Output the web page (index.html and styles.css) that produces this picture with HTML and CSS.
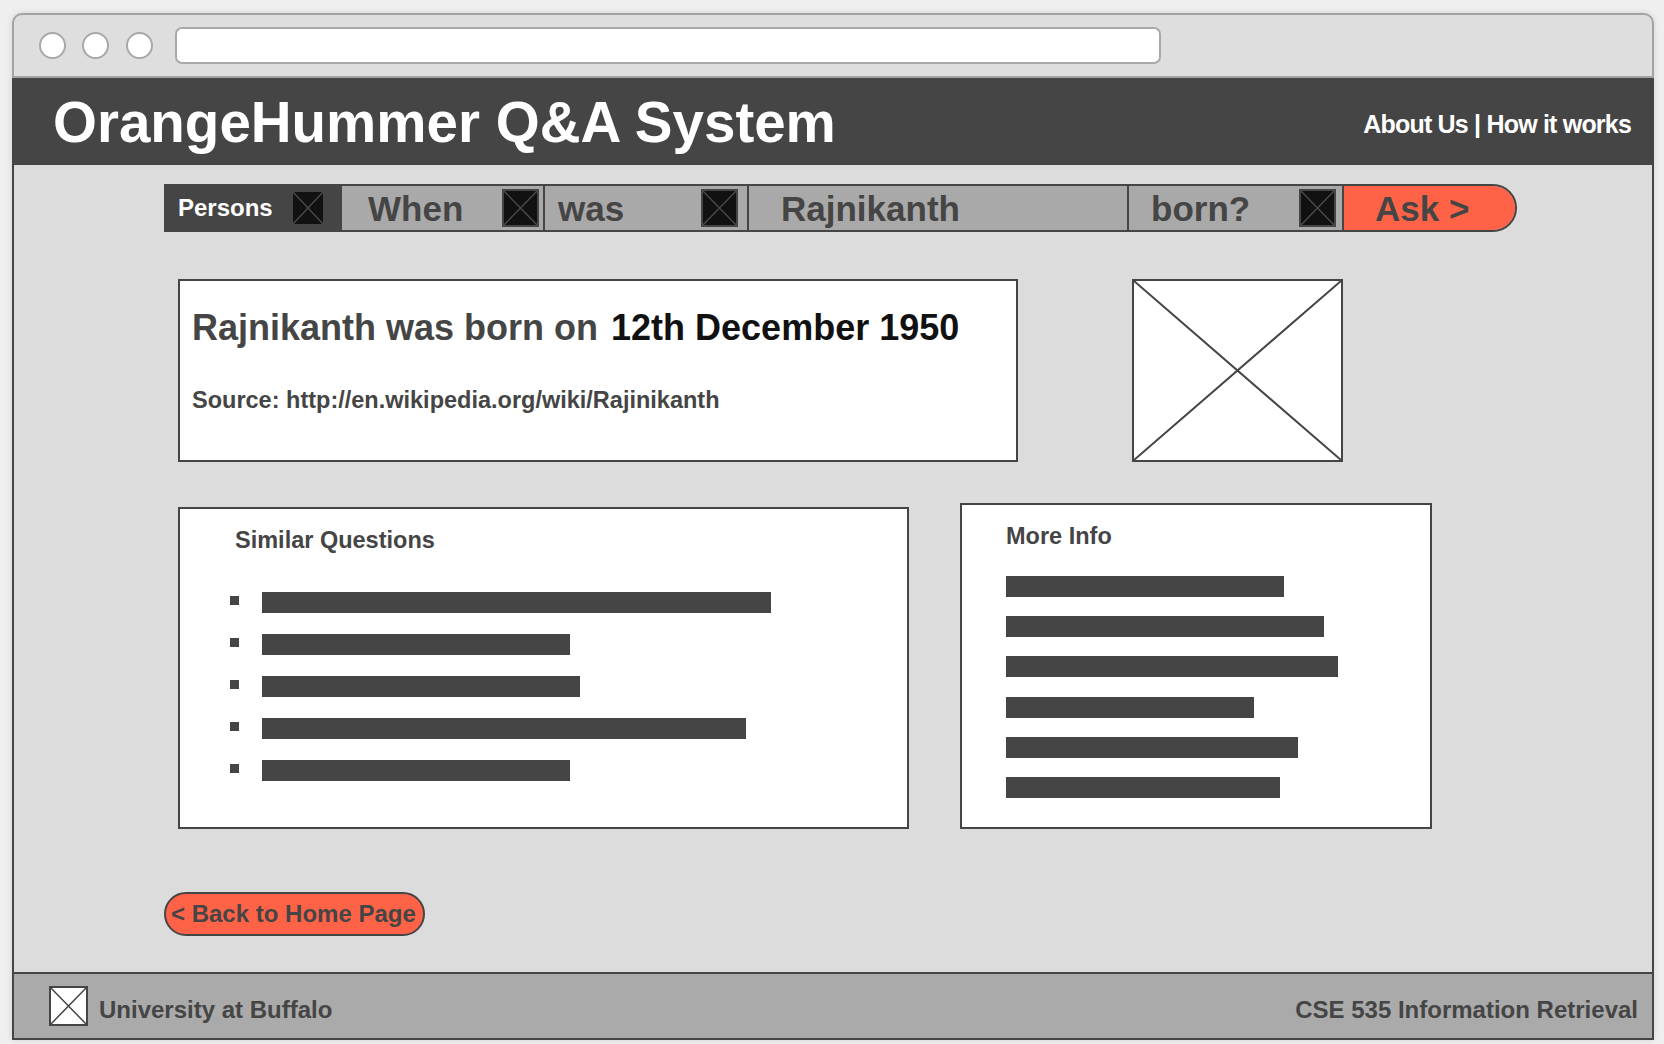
FILE: index.html
```html
<!DOCTYPE html>
<html lang="en">
<head>
<meta charset="utf-8">
<title>OrangeHummer Q&amp;A System</title>
<link rel="stylesheet" href="styles.css">
</head>
<body>
<div class="page">
  <div class="frame">
    <div class="chrome">
      <span class="dot"></span>
      <span class="dot"></span>
      <span class="dot"></span>
      <div class="address"></div>
    </div>
    <header class="header">
      <h1 class="title">OrangeHummer Q&amp;A System</h1>
      <nav class="nav">About Us | How it works</nav>
    </header>
    <main class="main">
      <div class="query">
        <div class="seg seg-type">
          <span class="seg-text">Persons</span>
          <svg class="xbox xbox-sm" viewBox="0 0 34 36" preserveAspectRatio="none"><rect x="1" y="1" width="32" height="34" fill="#111" stroke="#454545" stroke-width="2"/><path d="M1 1L33 35M33 1L1 35" stroke="#4a4a4a" stroke-width="1.4" fill="none"/></svg>
        </div>
        <div class="seg seg-when">
          <span class="seg-text">When</span>
          <svg class="xbox" viewBox="0 0 37 38" preserveAspectRatio="none"><rect x="1" y="1" width="35" height="36" fill="#111" stroke="#454545" stroke-width="2"/><path d="M1 1L36 37M36 1L1 37" stroke="#4a4a4a" stroke-width="1.4" fill="none"/></svg>
        </div>
        <div class="seg seg-was">
          <span class="seg-text">was</span>
          <svg class="xbox" viewBox="0 0 37 38" preserveAspectRatio="none"><rect x="1" y="1" width="35" height="36" fill="#111" stroke="#454545" stroke-width="2"/><path d="M1 1L36 37M36 1L1 37" stroke="#4a4a4a" stroke-width="1.4" fill="none"/></svg>
        </div>
        <div class="seg seg-name">
          <span class="seg-text">Rajnikanth</span>
        </div>
        <div class="seg seg-born">
          <span class="seg-text">born?</span>
          <svg class="xbox" viewBox="0 0 37 38" preserveAspectRatio="none"><rect x="1" y="1" width="35" height="36" fill="#111" stroke="#454545" stroke-width="2"/><path d="M1 1L36 37M36 1L1 37" stroke="#4a4a4a" stroke-width="1.4" fill="none"/></svg>
        </div>
        <div class="seg seg-ask">
          <span class="seg-text">Ask &gt;</span>
        </div>
      </div>

      <div class="answer-row">
        <section class="answer">
          <p class="answer-text">Rajnikanth was born on <span class="answer-hl">12th December 1950</span></p>
          <p class="answer-source">Source: http://en.wikipedia.org/wiki/Rajinikanth</p>
        </section>
        <div class="picture">
          <svg class="picture-x" viewBox="0 0 100 100" preserveAspectRatio="none"><path d="M0 0L100 100M100 0L0 100" stroke="#454545" stroke-width="2" vector-effect="non-scaling-stroke" fill="none"/></svg>
        </div>
      </div>

      <div class="info-row">
        <section class="panel similar">
          <h2 class="panel-title">Similar Questions</h2>
          <ul class="qlist">
            <li class="qitem"><span class="bullet"></span><span class="bar" style="width:509px"></span></li>
            <li class="qitem"><span class="bullet"></span><span class="bar" style="width:308px"></span></li>
            <li class="qitem"><span class="bullet"></span><span class="bar" style="width:318px"></span></li>
            <li class="qitem"><span class="bullet"></span><span class="bar" style="width:484px"></span></li>
            <li class="qitem"><span class="bullet"></span><span class="bar" style="width:308px"></span></li>
          </ul>
        </section>
        <section class="panel more">
          <h2 class="panel-title">More Info</h2>
          <div class="mlist">
            <span class="bar" style="width:278px"></span>
            <span class="bar" style="width:318px"></span>
            <span class="bar" style="width:332px"></span>
            <span class="bar" style="width:248px"></span>
            <span class="bar" style="width:292px"></span>
            <span class="bar" style="width:274px"></span>
          </div>
        </section>
      </div>

      <button class="back">&lt; Back to Home Page</button>
    </main>
    <footer class="footer">
      <div class="footer-left">
        <svg class="logo" viewBox="0 0 39 40" preserveAspectRatio="none"><rect x="1" y="1" width="37" height="38" fill="#fff" stroke="#454545" stroke-width="2"/><path d="M1 1L38 39M38 1L1 39" stroke="#454545" stroke-width="1.5" fill="none"/></svg>
        <span class="footer-text">University at Buffalo</span>
      </div>
      <span class="footer-text">CSE 535 Information Retrieval</span>
    </footer>
  </div>
</div>
</body>
</html>
```

FILE: styles.css
```css
* { box-sizing: border-box; }

html, body {
  margin: 0;
  padding: 0;
}

body {
  background: #efefef;
  font-family: "Liberation Sans", Arial, Helvetica, sans-serif;
  font-weight: bold;
  color: #454545;
}

.page {
  padding: 13px 10px 4px 12px;
}

.frame {
  height: 1027px;
  display: flex;
  flex-direction: column;
  border-radius: 10px 10px 0 0;
  box-shadow: 0 0 6px rgba(0, 0, 0, 0.12);
}

/* browser chrome */
.chrome {
  height: 65px;
  flex: none;
  background: #dedede;
  border: 2px solid #a3a3a3;
  border-radius: 10px 10px 0 0;
  display: flex;
  align-items: center;
  padding-left: 24.5px;
}

.dot {
  width: 27px;
  height: 27px;
  border-radius: 50%;
  background: #fff;
  border: 2px solid #a8a8a8;
  margin-right: 16.5px;
}

.dot:nth-child(3) {
  margin-right: 22.5px;
}

.address {
  width: 986px;
  height: 37px;
  background: #fff;
  border: 2px solid #a9a9a9;
  border-radius: 7px;
}

/* header */
.header {
  height: 87px;
  flex: none;
  background: #454545;
  display: flex;
  align-items: center;
  justify-content: space-between;
  padding: 4px 23px 0 41px;
}

.title {
  margin: 0;
  font-size: 56.5px;
  line-height: 1.15;
  color: #fff;
  font-weight: bold;
}

.nav {
  color: #fff;
  font-size: 25px;
  letter-spacing: -0.8px;
  padding-top: 2px;
}

/* main */
.main {
  flex: 1;
  background: #dcdcdc;
  border-left: 2px solid #454545;
  border-right: 2px solid #454545;
  padding: 19px 0 0 150px;
}

.query {
  width: 1353px;
  height: 48px;
  display: flex;
  border: 2px solid #454545;
  border-radius: 0 24px 24px 0;
  overflow: hidden;
  background: #a9a9a9;
}

.seg {
  height: 100%;
  display: flex;
  align-items: center;
  border-left: 2px solid #454545;
  background: #a9a9a9;
  font-size: 35px;
  color: #454545;
}

.seg-text {
  line-height: 1;
  white-space: nowrap;
}

.xbox {
  width: 37px;
  height: 38px;
  margin-left: auto;
  flex: none;
}

.xbox-sm {
  width: 34px;
  height: 36px;
}

.seg-type {
  width: 174px;
  border-left: none;
  background: #454545;
  color: #fff;
  font-size: 24px;
  padding: 0 15px 0 12px;
}

.seg-when { width: 203px; padding-left: 26px; padding-right: 4px; }
.seg-was { width: 204px; padding-left: 13px; padding-right: 9px; }
.seg-name { width: 380px; padding-left: 32px; }
.seg-born { width: 215px; padding-left: 22px; padding-right: 6px; }
.seg-ask {
  flex: 1;
  padding-left: 31px;
  background: #ff6347;
}

/* answer */
.answer-row {
  display: flex;
  margin-top: 47px;
  padding-left: 14px;
  gap: 114px;
}

.answer {
  width: 840px;
  height: 183px;
  background: #fff;
  border: 2px solid #454545;
  padding: 26px 12px 0 12px;
}

.answer-text {
  margin: 0;
  font-size: 36px;
  line-height: 42px;
  white-space: nowrap;
}

.answer-hl {
  color: #111;
  margin-left: 3px;
}

.answer-source {
  margin: 37px 0 0 0;
  font-size: 23.5px;
  line-height: 28px;
  white-space: nowrap;
}

.picture {
  width: 211px;
  height: 183px;
  background: #fff;
  border: 2px solid #454545;
}

.picture-x {
  display: block;
  width: 100%;
  height: 100%;
}

/* info panels */
.info-row {
  display: flex;
  align-items: flex-end;
  margin-top: 41px;
  padding-left: 14px;
  gap: 51px;
}

.panel {
  background: #fff;
  border: 2px solid #454545;
}

.panel-title {
  margin: 0;
  font-size: 23.5px;
  line-height: 28px;
  font-weight: bold;
  color: #454545;
}

.similar {
  width: 731px;
  height: 322px;
  padding: 17px 0 0 55px;
}

.qlist {
  list-style: none;
  margin: 38px 0 0 -5px;
  padding: 0;
  display: flex;
  flex-direction: column;
  gap: 21px;
}

.qitem {
  display: flex;
  align-items: flex-start;
  height: 21px;
}

.bullet {
  width: 9px;
  height: 9px;
  margin-top: 4px;
  background: #454545;
  margin-right: 23px;
  flex: none;
}

.bar {
  display: block;
  height: 21px;
  background: #454545;
}

.more {
  width: 472px;
  height: 326px;
  padding: 17px 0 0 44px;
}

.mlist {
  margin-top: 26px;
  display: flex;
  flex-direction: column;
  gap: 19.2px;
}

/* back button */
.back {
  display: block;
  margin-top: 63px;
  width: 261px;
  height: 44px;
  border: 2px solid #454545;
  border-radius: 22px;
  background: #ff6347;
  color: #454545;
  font-family: "Liberation Sans", Arial, Helvetica, sans-serif;
  font-weight: bold;
  font-size: 24px;
  text-align: left;
  padding: 0 0 0 5px;
  line-height: 1;
  white-space: nowrap;
}

/* footer */
.footer {
  height: 68px;
  flex: none;
  background: #aaaaaa;
  border: 2px solid #454545;
  display: flex;
  align-items: center;
  justify-content: space-between;
  padding: 0 14px 0 35px;
}

.footer-left {
  display: flex;
  align-items: center;
  gap: 11px;
}

.logo {
  width: 39px;
  height: 40px;
  display: block;
}

.footer-text {
  font-size: 24px;
  line-height: 28px;
  padding-top: 8px;
  color: #454545;
  white-space: nowrap;
}
```
